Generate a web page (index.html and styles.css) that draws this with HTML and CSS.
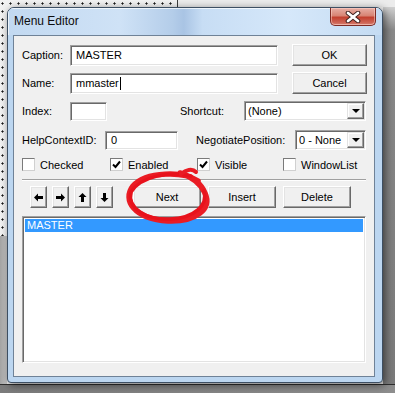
FILE: index.html
```html
<!DOCTYPE html>
<html lang="en">
<head>
    <meta charset="UTF-8">
    <title>Menu Editor</title>
    <link rel="stylesheet" href="styles.css">
</head>
<body>
    <div class="desk">
        <div class="window">
            <div class="titlebar">
                <span class="title">Menu Editor</span>
                <span class="close">
                    <svg width="16" height="12" viewBox="0 0 16 12">
                        <path d="M3 2 L13 10 M13 2 L3 10" stroke="#3b1e1c" stroke-width="4.6" stroke-linecap="round"/>
                        <path d="M3 2 L13 10 M13 2 L3 10" stroke="#fff" stroke-width="2.8" stroke-linecap="round"/>
                    </svg>
                </span>
            </div>
            <div class="frame">
                <div class="client">
                    <div class="row r1">
                        <span class="lbl w48">Caption:</span>
                        <div class="field w208">MASTER</div>
                        <button class="btn side">OK</button>
                    </div>
                    <div class="row r2">
                        <span class="lbl w48">Name:</span>
                        <div class="field w208">mmaster<span class="caret"></span></div>
                        <button class="btn side">Cancel</button>
                    </div>
                    <div class="row r3">
                        <span class="lbl w48">Index:</span>
                        <div class="field small w37"></div>
                        <span class="lbl shortcut">Shortcut:</span>
                        <div class="combo w122">
                            <span class="combo-text">(None)</span>
                            <span class="drop"><i class="tri"></i></span>
                        </div>
                    </div>
                    <div class="row r4">
                        <span class="lbl w83">HelpContextID:</span>
                        <div class="field small w73">0</div>
                        <span class="lbl negotiate">NegotiatePosition:</span>
                        <div class="combo w71">
                            <span class="combo-text">0 - None</span>
                            <span class="drop"><i class="tri"></i></span>
                        </div>
                    </div>
                    <div class="row r5">
                        <label class="check w88"><span class="box"></span>Checked</label>
                        <label class="check w87"><span class="box on"><svg width="9" height="9" viewBox="0 0 9 9"><path d="M1 4.5 L3.5 7 L8 1.5" fill="none" stroke="#000" stroke-width="2"/></svg></span>Enabled</label>
                        <label class="check w86"><span class="box on"><svg width="9" height="9" viewBox="0 0 9 9"><path d="M1 4.5 L3.5 7 L8 1.5" fill="none" stroke="#000" stroke-width="2"/></svg></span>Visible</label>
                        <label class="check"><span class="box"></span>WindowList</label>
                    </div>
                    <div class="sep"></div>
                    <div class="row r6">
                        <div class="arrows">
                            <button class="btn arrow"><svg width="9" height="9" viewBox="0 0 9 9"><path d="M0 4.5 L4 0.5 V3 H9 V6 H4 V8.5 Z"/></svg></button>
                            <button class="btn arrow"><svg width="9" height="9" viewBox="0 0 9 9" class="rot180"><path d="M0 4.5 L4 0.5 V3 H9 V6 H4 V8.5 Z"/></svg></button>
                            <button class="btn arrow"><svg width="9" height="9" viewBox="0 0 9 9" class="rot90"><path d="M0 4.5 L4 0.5 V3 H9 V6 H4 V8.5 Z"/></svg></button>
                            <button class="btn arrow"><svg width="9" height="9" viewBox="0 0 9 9" class="rot270"><path d="M0 4.5 L4 0.5 V3 H9 V6 H4 V8.5 Z"/></svg></button>
                        </div>
                        <div class="actions">
                            <button class="btn wide">Next</button>
                            <button class="btn wide">Insert</button>
                            <button class="btn wide">Delete</button>
                        </div>
                    </div>
                    <div class="listbox">
                        <div class="item selected">MASTER</div>
                    </div>
                </div>
            </div>
        </div>

        <!-- hand drawn mark around the Next button -->
        <svg class="scribble" width="395" height="393" viewBox="0 0 395 393">
            <path d="M198 181 C184 171 146 171 133 186 C122 200 134 219 168 221 C196 222 212 209 205 193 C201 184 193 177 180 173"
                  fill="none" stroke="#ea1c24" stroke-width="5.5" stroke-linecap="round"/>
            <path d="M191 176 C170 171 141 176 131 192 C127 208 146 220 170 219 C195 218 208 205 204 191"
                  fill="none" stroke="#e8121c" stroke-width="3.5" stroke-linecap="round"/>
            <path d="M181 174 C186 170 192 168 196 172"
                  fill="none" stroke="#ea1c24" stroke-width="4" stroke-linecap="round"/>
        </svg>
    </div>
</body>
</html>
```

FILE: styles.css
```css
body {
    margin: 0;
    font-family: 'Liberation Sans', Arial, sans-serif;
    font-size: 11px;
    color: #000;
}

.desk {
    position: relative;
    width: 395px;
    height: 393px;
    overflow: hidden;
    box-sizing: border-box;
    padding: 7px 0 0 7px;
    background:
        linear-gradient(to right, transparent 177px, #3c3c3c 177px, #3c3c3c 178px, #ececec 178px) 0 0 / 100% 7px no-repeat,
        linear-gradient(#2e2e2e, #2e2e2e) 0 384px / 100% 1px no-repeat,
        linear-gradient(to right, #7c7c7c, #8e8e8e) 0 385px / 100% 8px no-repeat,
        linear-gradient(to right, #a4a4a4, #c9c9c9) 0 236px / 7px 148px no-repeat,
        linear-gradient(to bottom, #e6e6e6, #8a8a8a 30px, #7a7a7a) 383px 0 / 12px 100% no-repeat,
        radial-gradient(circle at 2.5px 3.5px, #1a1a1a 0.9px, transparent 1.2px) 0 0 / 8px 8px,
        #f2f2f2;
}

.window {
    width: 376px;
    height: 376px;
    box-sizing: border-box;
    border: 1px solid #3d4f63;
    border-radius: 7px 7px 4px 4px;
    background: #bcd6f0;
    box-shadow: 2px 2px 8px rgba(0, 0, 0, 0.55);
    display: flex;
    flex-direction: column;
    overflow: hidden;
}

.titlebar {
    height: 27px;
    flex: none;
    display: flex;
    align-items: flex-start;
    padding-left: 6px;
    box-sizing: border-box;
    background: linear-gradient(to right, #c2d9f1 0%, #cfe2f6 30%, #b4cde9 44%, #a9c4e4 47%, #c7ddf4 52%, #d6e8fa 75%, #c4dbf2 100%);
    box-shadow: inset 1px 1px 0 rgba(255, 255, 255, 0.7);
}

.title {
    font-size: 12px;
    line-height: 27px;
    color: #0d0d0d;
}

.close {
    margin-left: auto;
    margin-right: 6px;
    width: 46px;
    height: 18px;
    box-sizing: border-box;
    border: 1px solid #7e2b25;
    border-top: none;
    border-radius: 0 0 5px 5px;
    background: linear-gradient(#e7aea5 0%, #d88474 45%, #c3402f 55%, #cf6a5b 90%, #e39a8e 100%);
    box-shadow: inset 0 0 0 1px rgba(255, 215, 205, 0.5);
    display: flex;
    align-items: center;
    justify-content: center;
}

.frame {
    flex: 1;
    padding: 0 7px 5px 5px;
    display: flex;
}

.client {
    flex: 1;
    border: 1px solid #6f8297;
    background: #f0f0f0;
    padding: 8px 0 0 8px;
    display: flex;
    flex-direction: column;
}

.row {
    display: flex;
    align-items: center;
    height: 22px;
}

.r2 { margin-top: 6px; }
.r3 { margin-top: 7px; height: 20px; }
.r4 { margin-top: 9px; height: 20px; }
.r5 { margin-top: 8px; height: 13px; }
.r6 { margin-top: 5px; }

.lbl {
    flex: none;
    white-space: nowrap;
}

.w48 { width: 48px; }
.w83 { width: 83px; }

.shortcut {
    margin-left: 73px;
    width: 64px;
}

.negotiate {
    margin-left: 18px;
    width: 99px;
}

.field {
    height: 21px;
    box-sizing: border-box;
    background: #fff;
    border: 1px solid;
    border-color: #a0a0a0 #fff #fff #a0a0a0;
    box-shadow: inset 1px 1px 0 #696969, inset -1px -1px 0 #e3e3e3;
    padding-left: 5px;
    line-height: 19px;
    white-space: nowrap;
    display: flex;
    align-items: center;
}

.field.small {
    height: 19px;
}

.w208 { width: 208px; }
.w37 { width: 37px; }
.w73 { width: 73px; }
.w122 { width: 122px; }
.w71 { width: 71px; }

.caret {
    display: inline-block;
    width: 1px;
    height: 13px;
    margin-left: 1px;
    background: #000;
}

.btn {
    font: inherit;
    color: #000;
    height: 22px;
    padding: 0;
    box-sizing: border-box;
    background: #f0f0f0;
    border: 1px solid;
    border-color: #fff #696969 #696969 #fff;
    box-shadow: inset -1px -1px 0 #a0a0a0, inset 1px 1px 0 #e3e3e3;
    display: flex;
    align-items: center;
    justify-content: center;
}

.side {
    width: 75px;
    margin-left: 14px;
}

.combo {
    height: 20px;
    box-sizing: border-box;
    background: #fff;
    border: 1px solid;
    border-color: #a0a0a0 #fff #fff #a0a0a0;
    box-shadow: inset 1px 1px 0 #696969, inset -1px -1px 0 #e3e3e3;
    padding: 1px 1px 1px 3px;
    display: flex;
    align-items: center;
}

.combo-text {
    flex: 1;
    white-space: nowrap;
    overflow: hidden;
}

.drop {
    width: 17px;
    height: 16px;
    box-sizing: border-box;
    background: #f0f0f0;
    border: 1px solid;
    border-color: #e3e3e3 #696969 #696969 #e3e3e3;
    box-shadow: inset -1px -1px 0 #a0a0a0, inset 1px 1px 0 #fff;
    display: flex;
    align-items: center;
    justify-content: center;
}

.tri {
    width: 0;
    height: 0;
    border-left: 4px solid transparent;
    border-right: 4px solid transparent;
    border-top: 4px solid #000;
}

.check {
    display: flex;
    align-items: center;
    flex: none;
    white-space: nowrap;
}

.w88 { width: 88px; }
.w87 { width: 87px; }
.w86 { width: 86px; }

.box {
    width: 13px;
    height: 13px;
    box-sizing: border-box;
    margin-right: 5px;
    background: #fff;
    border: 1px solid;
    border-color: #7a7a7a #d0d0d0 #d0d0d0 #7a7a7a;
    display: flex;
    align-items: center;
    justify-content: center;
}

.sep {
    margin-top: 8px;
    width: 344px;
    border-top: 1px solid #a0a0a0;
    border-bottom: 1px solid #fff;
}

.arrows {
    display: flex;
    gap: 5px;
    margin-left: 8px;
}

.arrow {
    width: 17px;
}

.rot180 { transform: rotate(180deg); }
.rot90 { transform: rotate(90deg); }
.rot270 { transform: rotate(270deg); }

.actions {
    display: flex;
    gap: 7px;
    margin-left: 20px;
}

.wide {
    width: 68px;
}

.listbox {
    margin-top: 8px;
    width: 344px;
    height: 147px;
    box-sizing: border-box;
    background: #fff;
    border: 1px solid;
    border-color: #a0a0a0 #fff #fff #a0a0a0;
    box-shadow: inset 1px 1px 0 #696969, inset -1px -1px 0 #e3e3e3;
    padding: 2px;
}

.item {
    height: 13px;
    line-height: 13px;
    padding-left: 2px;
}

.selected {
    background: #3399ff;
    color: #fff;
}

.scribble {
    position: absolute;
    left: 0;
    top: 0;
    pointer-events: none;
}
```
